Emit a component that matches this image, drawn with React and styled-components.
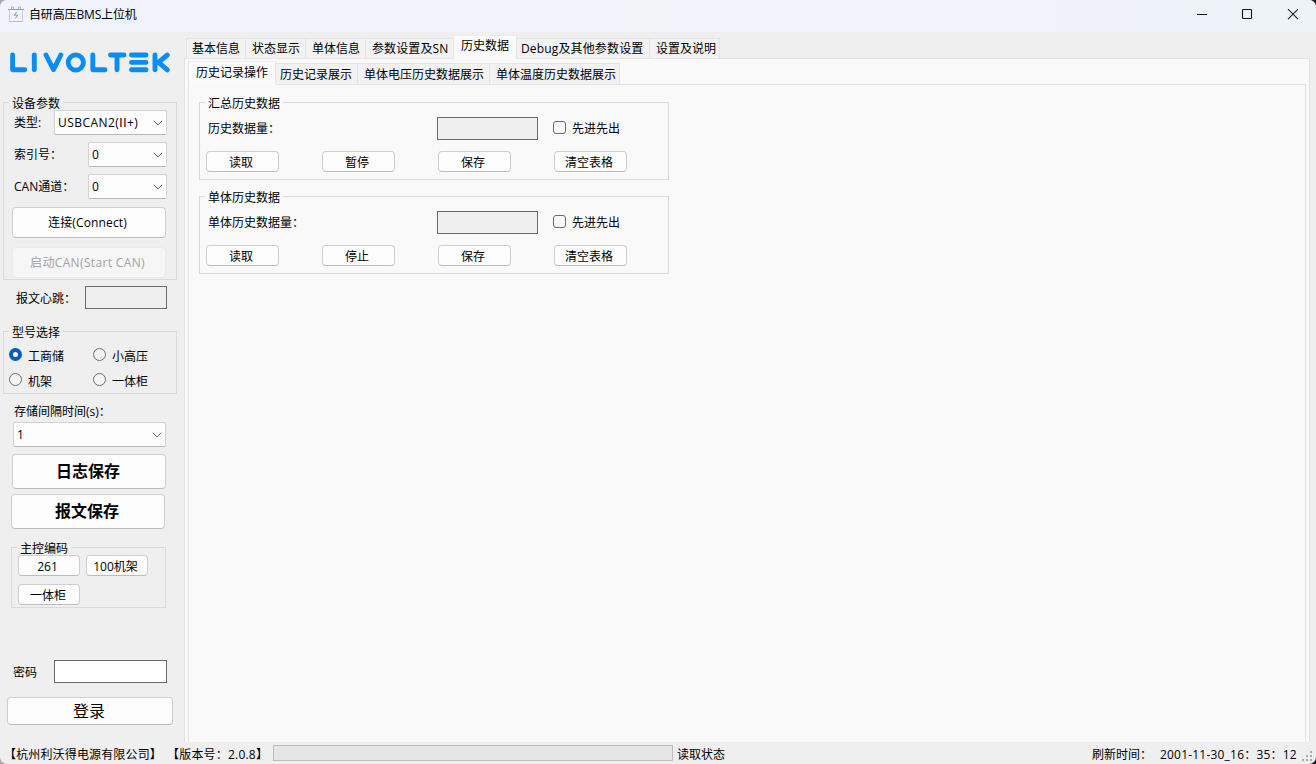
import React from "react";
import styled, { createGlobalStyle } from "styled-components";

const Global = createGlobalStyle`
  *, *::before, *::after { box-sizing: border-box; }
  html, body { margin: 0; padding: 0; overflow: hidden; background: linear-gradient(90deg, #a9a9ad 50%, #1c1d22 50%); }
  body { font-family: "Open Sans", "Noto Sans", "Noto Sans CJK SC", sans-serif; font-size: 12px; line-height: 16px; color: #000; }
  button, input { font: inherit; color: inherit; margin: 0; }
`;

const Window = styled.div`
  width: 1316px;
  height: 764px;
  display: flex;
  flex-direction: column;
  background: #efefef;
  border-radius: 7px;
  overflow: hidden;
`;

const TitleBar = styled.header`
  height: 32px;
  flex: none;
  display: flex;
  align-items: flex-start;
  padding: 6px 16px 0 8px;
  background: linear-gradient(90deg, #f0f3f9, #f1f3f9 50%, #eef3f8);
`;

const Title = styled.span`
  margin-left: 5px;
  padding-top: 1px;
  flex: 1;
  letter-spacing: -0.15px;
`;

const Controls = styled.div`
  display: flex;
  gap: 33px;
  padding-top: 2px;
  svg { display: block; }
`;

const Body = styled.div`
  flex: 1;
  display: flex;
  min-height: 0;
`;

const Sidebar = styled.aside`
  width: 184px;
  flex: none;
  display: flex;
  flex-direction: column;
  align-items: flex-start;
`;

const Logo = styled.svg`
  display: block;
  margin: 20px 0 0 9px;
  flex: none;
`;

const GroupBox = styled.section`
  position: relative;
  flex: none;
  width: ${(p) => p.$w}px;
  height: ${(p) => p.$h}px;
  margin: ${(p) => p.$m};
  padding: ${(p) => p.$p};
  border: 1px solid #dadada;
`;

const Legend = styled.h2`
  position: absolute;
  top: -8px;
  left: 5px;
  height: 15px;
  margin: 0;
  padding: 1px 3px 0;
  font-size: 12px;
  font-weight: 400;
  line-height: 16px;
  background: ${(p) => p.$bg || "#efefef"};
  white-space: nowrap;
`;

const Field = styled.div`
  display: flex;
  align-items: center;
  justify-content: space-between;
  width: ${(p) => p.$w}px;
  margin: ${(p) => p.$m};
  white-space: nowrap;
`;

const Label = styled.span`
  line-height: 16px;
  white-space: nowrap;
  margin: ${(p) => p.$m || 0};
`;

const ComboRoot = styled.div`
  display: flex;
  align-items: center;
  justify-content: space-between;
  width: ${(p) => p.$w}px;
  height: 25px;
  flex: none;
  margin: ${(p) => p.$m || 0};
  padding: 0 3px 0 3px;
  background: #fdfdfd;
  border: 1px solid #d2d2d2;
  border-bottom-color: #b9b9b9;
  border-radius: 2px;
  letter-spacing: ${(p) => p.$ls || 0};
`;

const Numeral = styled.span`
  font-family: Roboto, sans-serif;
  letter-spacing: 0.6px;
`;

const Button = styled.button`
  width: ${(p) => p.$w}px;
  height: ${(p) => p.$h || 21}px;
  flex: none;
  margin: ${(p) => p.$m || 0};
  padding: ${(p) => p.$p || "2px 3px 0 0"};
  display: flex;
  align-items: center;
  justify-content: center;
  background: #fdfdfd;
  border: 1px solid #cfcfcf;
  border-bottom-color: #bcbcbc;
  border-radius: 4px;
  font-size: ${(p) => p.$size || 12}px;
  font-weight: ${(p) => (p.$bold ? 700 : 400)};
  letter-spacing: ${(p) => p.$ls || 0};
  white-space: nowrap;
  &:disabled {
    color: #a3a3a3;
    background: #f6f6f6;
    border-color: #eaeaea;
  }
`;

const TextBox = styled.input`
  width: ${(p) => p.$w}px;
  height: 23px;
  flex: none;
  padding: 0 4px;
  border: 1px solid #6a6a6a;
  border-radius: 0;
  outline: none;
  background: ${(p) => (p.readOnly ? "#efefef" : "#fff")};
`;

const RadioGrid = styled.div`
  display: grid;
  grid-template-columns: 84px 80px;
  grid-auto-rows: 25px;
`;

const RadioLabel = styled.label`
  display: flex;
  align-items: center;
  gap: 6px;
  span { padding-top: 4px; margin-bottom: -1px; }
`;

const Dot = styled.i`
  width: 13px;
  height: 13px;
  border-radius: 50%;
  border: ${(p) => (p.$on ? "4px solid #005fb8" : "1px solid #6e6e6e")};
  background: ${(p) => (p.$on ? "#fff" : "#f3f3f3")};
`;

const CodeGrid = styled.div`
  display: grid;
  grid-template-columns: 62px 62px;
  column-gap: 6px;
  row-gap: 8px;
`;

const Pane = styled.div`
  display: flex;
  flex-direction: column;
  flex: none;
  width: 1126px;
`;

const TabBar = styled.nav`
  display: flex;
  align-items: flex-end;
  height: ${(p) => p.$h}px;
  flex: none;
  padding-left: ${(p) => p.$x}px;
  margin-bottom: -1px;
  position: relative;
`;

const Tab = styled.div`
  width: ${(p) => p.$w}px;
  height: ${(p) => (p.$on ? p.$h + 2 : p.$h)}px;
  padding: ${(p) => p.$t ?? 2}px 0 0 ${(p) => p.$p ?? 5}px;
  background: ${(p) => (p.$on ? "#fafafa" : "#f2f2f2")};
  border: 1px solid #e5e5e5;
  border-left-width: ${(p) => (p.$first ? 1 : 0)}px;
  ${(p) => p.$on && "border-bottom-color: #fafafa; border-top-color: #ededed;"}
  white-space: nowrap;
  letter-spacing: ${(p) => p.$ls || 0};
`;

const OuterPage = styled.div`
  flex: 1;
  display: flex;
  flex-direction: column;
  padding: 0 3px 0 3px;
  background: #f9f9f9;
  border: 1px solid #e3e3e3;
  border-bottom: 0;
`;

const InnerPage = styled.div`
  flex: 1;
  padding: 17px 0 0 10px;
  background: #f9f9f9;
  border: 1px solid #e3e3e3;
  border-bottom: 0;
`;

const FormRow = styled.div`
  display: flex;
  align-items: center;
  height: 23px;
`;

const RowName = styled.span`
  width: 229px;
  padding-top: 1px;
  white-space: nowrap;
`;

const CheckLabel = styled.label`
  display: flex;
  align-items: center;
  gap: 6px;
  margin-left: 15px;
  padding-bottom: 2px;
  span { padding-top: 2px; }
`;

const Box = styled.i`
  width: 13px;
  height: 13px;
  border: 1px solid #6b6b6b;
  border-radius: 3px;
  background: #f8f8f8;
`;

const ButtonRow = styled.div`
  display: flex;
  gap: 43px;
  margin: 11px 0 0 -2px;
`;

const StatusBar = styled.footer`
  height: 22px;
  flex: none;
  display: flex;
  align-items: center;
  padding-left: 4px;
  position: relative;
  white-space: nowrap;
`;

const Company = styled.span`
  width: 163px;
  padding-top: 3px;
  letter-spacing: 0.15px;
`;

const Version = styled.span`
  width: 106px;
  padding-top: 3px;
  letter-spacing: 0.2px;
`;

const Progress = styled.div`
  width: 400px;
  height: 16px;
  background: #e6e6e6;
  border: 1px solid #bcbcbc;
`;

const ReadState = styled.span`
  width: 415px;
  margin-left: 4px;
  padding-top: 3px;
`;

const Clock = styled.span`
  display: flex;
  padding-top: 3px;
  span { width: 68px; }
  time { letter-spacing: 0.2px; }
`;

const Grip = styled.svg`
  position: absolute;
  right: 3px;
  bottom: 2px;
`;

function Chevron() {
  return (
    <svg width="10" height="6" viewBox="0 0 10 6" fill="none" stroke="#666" strokeWidth="1">
      <path d="M0.8 0.8 L5 5 L9.2 0.8" />
    </svg>
  );
}

function Combo({ value, ...rest }) {
  return (
    <ComboRoot {...rest}>
      <span>{value}</span>
      <Chevron />
    </ComboRoot>
  );
}

function Radio({ text, on }) {
  return (
    <RadioLabel>
      <Dot $on={on} />
      <span>{text}</span>
    </RadioLabel>
  );
}

function HistoryGroup({ title, name, stop, m }) {
  return (
    <GroupBox $w={470} $h={78} $m={m} $p="14px 0 0 8px">
      <Legend $bg="#f9f9f9">{title}</Legend>
      <FormRow>
        <RowName>{name}</RowName>
        <TextBox $w={101} readOnly />
        <CheckLabel>
          <Box />
          <span>先进先出</span>
        </CheckLabel>
      </FormRow>
      <ButtonRow>
        <Button $w={73}>读取</Button>
        <Button $w={73}>{stop}</Button>
        <Button $w={73}>保存</Button>
        <Button $w={73}>清空表格</Button>
      </ButtonRow>
    </GroupBox>
  );
}

function Brand() {
  return (
    <Logo width="163" height="22" viewBox="0 0 163 22" fill="none" stroke="#0a8cf5" strokeWidth="4.9" strokeLinecap="round" strokeLinejoin="round">
      <path d="M3.6 3V17.8H15.8" />
      <path d="M25.3 3V17.8" />
      <path d="M37 3L44.5 17.6L51.8 3" />
      <circle cx="66.8" cy="10.5" r="7.6" />
      <path d="M83.8 3V17.8H96" />
      <path d="M101.5 3H115M108 3V17.8" />
      <path d="M122.5 3H137M122.5 10.4H137M122.5 17.8H137" />
      <path d="M146 3V17.8M158.3 3L149.5 10.4L158.3 17.8" />
    </Logo>
  );
}

export default function App() {
  return (
    <>
      <Global />
      <Window>
        <TitleBar>
          <svg width="16" height="17" viewBox="0 0 16 17" fill="none">
            <path d="M3.5 3V1H5.5V3M10.5 3V1H12.5V3" stroke="#c39db2" strokeWidth=".8" />
            <path d="M0 3.5H16" stroke="#c6899f" />
            <path d="M1.5 4V15.5H14.5V4" stroke="#d3c9da" />
            <path d="M1 15.5H15" stroke="#cfb3c4" />
            <path d="M8.6 6L6.2 9.2H9.8L7.4 12.4" stroke="#85839a" strokeWidth=".9" />
          </svg>
          <Title>自研高压BMS上位机</Title>
          <Controls>
            <svg width="13" height="13" fill="none" stroke="#111"><path d="M2 6.5H12" /></svg>
            <svg width="13" height="13" fill="none" stroke="#111" strokeWidth="1.1"><rect x="1.5" y="1.5" width="9" height="9" rx=".8" /></svg>
            <svg width="13" height="13" fill="none" stroke="#222" strokeWidth="1.1"><path d="M1 1.2L11 11.2M11 1.2L1 11.2" /></svg>
          </Controls>
        </TitleBar>
        <Body>
          <Sidebar>
            <Brand />
            <GroupBox $w={174} $h={178} $m="28px 0 0 3px" $p="7px 0 0 8px">
              <Legend>设备参数</Legend>
              <Field $w={153} $m="0 0 7px 2px">
                <Label>类型:</Label>
                <Combo $w={113} $ls="0.45px" value={<>USBCAN2(<Numeral>II</Numeral>+)</>} />
              </Field>
              <Field $w={153} $m="0 0 7px 2px">
                <Label $m="1px 0 0">索引号：</Label>
                <Combo $w={79} value="0" />
              </Field>
              <Field $w={153} $m="0 0 8px 2px">
                <Label $m="1px 0 0">CAN通道：</Label>
                <Combo $w={79} value="0" />
              </Field>
              <Button $w={154} $h={31} $m="0 0 9px" $p="0 3px 0 0" $ls="0.15px">连接(Connect)</Button>
              <Button $w={154} $h={31} $p="0 3px 0 0" $ls="0.35px" disabled>启动CAN(Start CAN)</Button>
            </GroupBox>
            <Field $w={151} $m="6px 0 0 16px">
              <Label $m="3px 0 0">报文心跳：</Label>
              <TextBox $w={82} readOnly />
            </Field>
            <GroupBox $w={174} $h={63} $m="22px 0 0 3px" $p="10px 0 0 5px">
              <Legend>型号选择</Legend>
              <RadioGrid>
                <Radio text="工商储" on />
                <Radio text="小高压" />
                <Radio text="机架" />
                <Radio text="一体柜" />
              </RadioGrid>
            </GroupBox>
            <Label $m="10px 0 0 14px">存储间隔时间(s)：</Label>
            <Combo $w={153} $m="2px 0 0 13px" value="1" />
            <Button $w={154} $h={35} $m="7px 0 0 12px" $p="0 2px 1px 0" $size={16} $bold>日志保存</Button>
            <Button $w={154} $h={35} $m="5px 0 0 11px" $p="0 2px 1px 0" $size={16} $bold>报文保存</Button>
            <GroupBox $w={155} $h={61} $m="18px 0 0 11px" $p="7px 0 0 6px">
              <Legend>主控编码</Legend>
              <CodeGrid>
                <Button $w={62}>261</Button>
                <Button $w={62}>100机架</Button>
                <Button $w={62} $p="3px 2px 0 0">一体柜</Button>
              </CodeGrid>
            </GroupBox>
            <Field $w={154} $m="52px 0 0 13px">
              <Label $m="2px 0 0">密码</Label>
              <TextBox $w={113} />
            </Field>
            <Button $w={166} $h={28} $m="14px 0 0 7px" $p="0 2px 0 0" $size={16}>登录</Button>
          </Sidebar>
          <Pane>
            <TabBar $h={27} $x={2}>
              <Tab $w={60} $h={21} $first>基本信息</Tab>
              <Tab $w={60} $h={21} $p={6}>状态显示</Tab>
              <Tab $w={60} $h={21} $p={6}>单体信息</Tab>
              <Tab $w={88} $h={21} $p={6} $ls="0.1px">参数设置及SN</Tab>
              <Tab $w={63} $h={22} $on $p={7}>历史数据</Tab>
              <Tab $w={133} $h={21} $p={4} $ls="0.15px">Debug及其他参数设置</Tab>
              <Tab $w={70} $h={21} $p={6}>设置及说明</Tab>
            </TabBar>
            <OuterPage>
              <TabBar $h={26} $x={0}>
                <Tab $w={88} $h={22} $on $first $p={7} $t={3}>历史记录操作</Tab>
                <Tab $w={82} $h={22} $p={4} $t={3}>历史记录展示</Tab>
                <Tab $w={132} $h={22} $p={6} $t={3}>单体电压历史数据展示</Tab>
                <Tab $w={130} $h={22} $p={6} $t={3}>单体温度历史数据展示</Tab>
              </TabBar>
              <InnerPage>
                <HistoryGroup title="汇总历史数据" name="历史数据量：" stop="暂停" m="0" />
                <HistoryGroup title="单体历史数据" name="单体历史数据量：" stop="停止" m="16px 0 0" />
              </InnerPage>
            </OuterPage>
          </Pane>
        </Body>
        <StatusBar>
          <Company>【杭州利沃得电源有限公司】</Company>
          <Version>【版本号：2.0.8】</Version>
          <Progress />
          <ReadState>读取状态</ReadState>
          <Clock>
            <span>刷新时间：</span>
            <time>2001-11-30_16：35：12</time>
          </Clock>
          <Grip width="11" height="11" fill="#a9a9a9">
            <path d="M8 0h2v2h-2zM4 4h2v2h-2zM8 4h2v2h-2zM0 8h2v2h-2zM4 8h2v2h-2zM8 8h2v2h-2z" />
          </Grip>
        </StatusBar>
      </Window>
    </>
  );
}
